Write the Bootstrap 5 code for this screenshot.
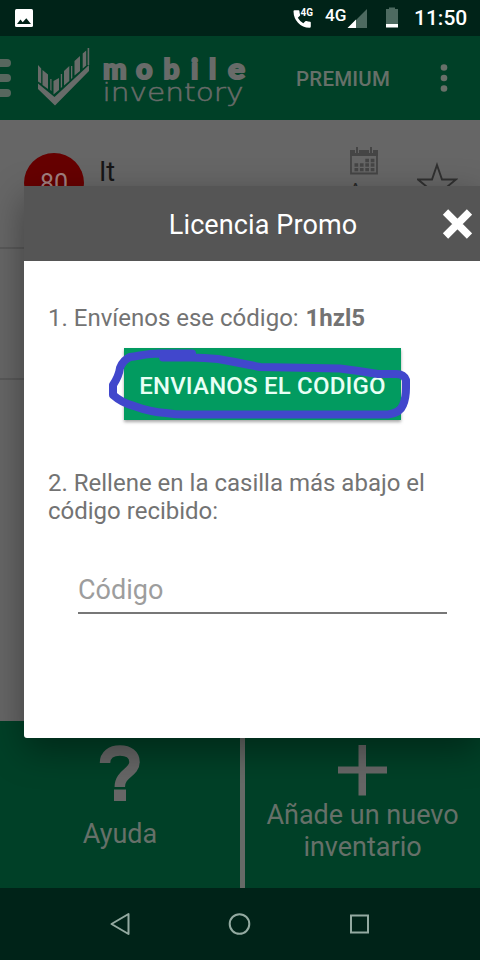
<!DOCTYPE html>
<html lang="es">
<head>
<meta charset="utf-8">
<meta name="viewport" content="width=device-width, initial-scale=1">
<title>Licencia Promo</title>
<link href="https://cdn.jsdelivr.net/npm/bootstrap@5.3.0/dist/css/bootstrap.min.css" rel="stylesheet">
<style>
body{font-family:Roboto,"Liberation Sans",sans-serif;background:#666;color:#666}
.screen{width:480px;height:960px}
svg{display:block;flex:none}
.statusbar{height:36px;background:#002318;color:#fff}
.clock{font-size:21px;font-weight:500;line-height:36px;width:55px}
.topbar{height:84px;background:#004027}
.premium{font-size:20.500px;font-weight:500;line-height:24px;width:96px;color:#667069;letter-spacing:.2px;margin:1px 0 0 26px}
.inv-list{height:601px;background:#666}
.inv-row{border-bottom:2px solid #595959}
.inv-first{height:129px}
.inv-second{height:131px}
.count{width:60px;height:60px;background:#660000;color:#a08080;font-size:25px;line-height:61px;margin:33px 0 0 24px}
.inv-name{font-size:27px;line-height:32px;color:#161616;margin:36px 0 0 15px}
.inv-date{width:60px;margin:27px 0 0 auto;color:#292929;font-size:19px;line-height:22px}
.inv-star{margin:41px 22px 0 23px}
.tiles{height:167px;background:#004027;color:#667069;font-size:27px;line-height:32px}
.tile-split{border-left:5px solid #666a67}
.tile-help{width:240px}
.navkeys{height:72px;background:#002318}
.promo{left:24px;top:186px;width:456px;height:552px;border-radius:3px 0 0 3px;box-shadow:0 12px 36px rgba(0,0,0,.38);color:#737373}
.promo-head{height:75px;background:#555;color:#fff}
.promo-title{font-size:27px;line-height:32px;padding:3px 0 0 60px;letter-spacing:.1px}
.promo-text{font-size:24px;line-height:28px;padding-top:43px}
.promo-text b{margin-left:1px}
.promo-step{padding-top:49px}
.send{width:277px;height:72px;background:#029b60;color:#e8fff5;font-size:24px;font-weight:500;line-height:28px;letter-spacing:.2px;border-radius:0;box-shadow:0 2px 3px rgba(0,0,0,.35);margin:16px 0 0 76px}
.scribble{left:82px;top:158px}
.code-input,.code-input:focus{background:transparent;border:0;border-bottom:2px solid #777;border-radius:0;font-size:27px;line-height:32px;width:369px;height:47px;box-shadow:none;padding:0;margin:42px 0 0 30px}
.code-input::placeholder{color:#9d9d9d;opacity:1}
</style>
<script src="https://cdn.jsdelivr.net/npm/bootstrap@5.3.0/dist/js/bootstrap.bundle.min.js"></script>
</head>
<body>
<div class="screen position-relative overflow-hidden d-flex flex-column">
  <div class="statusbar d-flex align-items-center">
    <svg width="292" height="36"><rect x="15" y="9" width="18" height="18" rx="1.5" fill="#fff"/><path d="M17 24l3.500-4.500 2.200 2.700 3.600-4 4.700 5.800z" fill="#002318"/></svg>
    <svg width="122" height="36" font-family="Roboto,sans-serif" fill="#fff"><path d="M2 10h4.200q.6 0 .7.8.1 2 .7 3.600.2.6-.2 1L5.300 17.400q2 3.600 5.500 5.500l2-2q.5-.5 1.100-.2 1.700.6 3.700.7.700 0 .7.700V26q0 1.500-1.200 1.500Q10 27.500 5.500 22.500 1.200 18 1 11q0-1 1-1z" transform="translate(.5 .3)"/><text x="8.500" y="16" font-size="10.500" font-weight="700" textLength="12.500" lengthAdjust="spacingAndGlyphs">4G</text><text x="33" y="20.500" font-size="17" font-weight="500" textLength="21.500" lengthAdjust="spacingAndGlyphs">4G</text><path d="M75 9v19H56z" fill="#4d6a60"/><path d="M64 19.500V28h-8.500z"/><path d="M94 9h3V7.500h6V9h3v18H94z" fill="#4d6a60"/><path d="M94 24h12v3.500H94z"/></svg>
    <div class="clock">11:50</div>
  </div>
  <nav class="topbar d-flex align-items-center">
    <svg width="270" height="84" fill="#686b69">
      <g fill="#57675e"><rect x="-8" y="23" width="19" height="8" rx="4"/><rect x="-8" y="38" width="19" height="8" rx="4"/><rect x="-8" y="53" width="19" height="8" rx="4"/></g>
      <path d="M38 47.500L54.500 61 89 29v6L55 69.500 38 53z"/>
      <path d="M38 29l3.200 3.500V47.500L38 45.500zM42.500 34l5.500 4.500v14.500l-5.500-4zM50.300 43h1.200v12l-1.200-1zM53.500 45l5.500-3v12l-5.500 4.500zM60.800 38h1.300v13l-1.300 1zM64 35l5.300-5v15l-5.300 4.500zM71 30h1.300v12L71 43zM74.500 25l5.500-5v15l-5.500 4.500zM82.700 17.500l3.500-3v15l-3.500 3zM87.600 12h1.600v17h-1.600z"/>
      <g font-family="Lato,sans-serif" font-weight="900" font-size="28" stroke="#686b69" stroke-width="2"><text y="43"><tspan x="103">m</tspan></text><text x="136" y="43" textLength="16.500" lengthAdjust="spacingAndGlyphs">o</text><text x="163.500" y="43">b</text><text x="191" y="43">i</text><text x="209" y="43">l</text><text x="228" y="43" textLength="17" lengthAdjust="spacingAndGlyphs">e</text></g>
      <text x="102.500" y="65" font-family="'DejaVu Sans','DejaVu Sans Light',sans-serif" font-weight="200" font-size="25" stroke="#686b69" stroke-width=".5" textLength="141" lengthAdjust="spacingAndGlyphs">inventory</text>
    </svg>
    <div class="premium text-nowrap">PREMIUM</div>
    <svg class="ms-auto me-4" width="24" height="84" fill="#687069"><circle cx="12" cy="31.500" r="3.300"/><circle cx="12" cy="42" r="3.300"/><circle cx="12" cy="52.500" r="3.300"/></svg>
  </nav>
  <main class="inv-list">
    <div class="inv-row inv-first d-flex align-items-start">
      <div class="count rounded-circle text-center flex-shrink-0">80</div>
      <div class="inv-name">It</div>
      <div class="inv-date text-center">
        <svg class="mx-auto" width="28" height="32" viewBox="0 0 28 32"><path d="M1 4v22.500h26V4" fill="none" stroke="#454545" stroke-width="1.800"/><path d="M0 3h28v6H0z" fill="#454545"/><path d="M7 0v6M21 0v6" stroke="#666" stroke-width="4"/><path d="M7 0v6M21 0v6" stroke="#454545" stroke-width="2"/><path d="M15.300 13.500h9.200M4.500 18h20M4.500 22.700h20" stroke="#454545" stroke-width="3.300" stroke-dasharray="3.700 1.700"/></svg>
        <div>Apr</div>
      </div>
      <svg class="inv-star" width="41" height="38" viewBox="0 0 41 38" fill="none" stroke="#303030" stroke-width="1.900"><path d="M20 4l5 14.500h14L28 27.500 32 38l-12-8-12 8 4-10.500L1 18.500h14z"/></svg>
    </div>
    <div class="inv-row inv-second"></div>
  </main>
  <div class="tiles d-flex text-center">
    <div class="tile-help">
      <svg class="mx-auto" width="42" height="97" viewBox="0 0 42 97"><path d="M6 42C6 34 12 29.500 21 29.500S35.500 34 35.500 41C35.500 52 20.800 52 20.800 66" fill="none" stroke="#666" stroke-width="10.500"/><path d="M15 68.500h12V80H15z" fill="#666"/></svg>
      <div>Ayuda</div>
    </div>
    <div class="tile-split flex-fill">
      <svg class="mx-auto" width="50" height="78"><path d="M20.500 24h7.500v21.500H49v7H28v22h-7.500v-22H-1v-7h21.500z" fill="#666" overflow="visible"/></svg>
      <div>Añade un nuevo<br>inventario</div>
    </div>
  </div>
  <div class="navkeys d-flex justify-content-center">
    <svg width="280" height="72" fill="none" stroke="#93aaa1" stroke-width="2"><path d="M28.500 26v20L11.500 36z" stroke-linejoin="round"/><circle cx="139.500" cy="36" r="9.800"/><rect x="251" y="27.500" width="17" height="17"/></svg>
  </div>

  <section class="promo position-absolute bg-white">
    <div class="promo-head d-flex align-items-center">
      <div class="promo-title flex-fill text-center">Licencia Promo</div>
      <svg class="me-2" width="30" height="30" viewBox="0 0 30 30"><path d="M3.500 3l24 24M27.500 3l-24 24" stroke="#fff" stroke-width="7.500"/></svg>
    </div>
    <div class="px-4">
      <div class="promo-text">1. Envíenos ese código: <b>1hzl5</b></div>
      <button class="send btn d-block px-0 pb-0 pt-1">ENVIANOS EL CODIGO</button>
      <div class="promo-text promo-step">2. Rellene en la casilla más abajo el código recibido:</div>
      <input class="code-input form-control" placeholder="Código">
    </div>
    <svg class="scribble position-absolute" width="310" height="80" viewBox="106 344 310 80" fill="none" stroke="#4147cc" stroke-width="8" stroke-linecap="round" stroke-linejoin="round"><path d="M192 353.500H162C148 353 140 356 130 357Q123 360 120 368 119 376 113 385V395Q122 403 134 406 150 412 166 413 178 415 190 414.500H388Q400 413 403 405 406 398 406 388V380Q404 374 396 374H378Q360 371 340 368.500L260 367Q235 362 218 359 200 357 186 357.500H163"/></svg>
  </section>
</div>
</body>
</html>
